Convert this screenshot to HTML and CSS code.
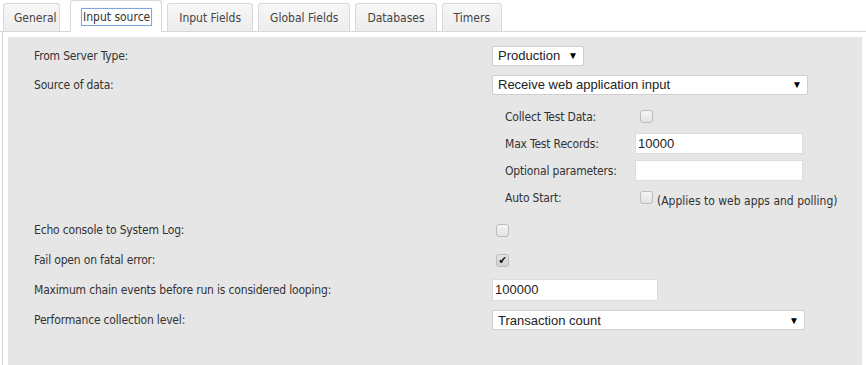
FILE: index.html
```html
<!DOCTYPE html>
<html>
    <head>
        <meta charset="utf-8" />
        <title>Input source</title>
        <link rel="stylesheet" href="styles.css">
    </head>
    <body>
        <div class="tabs">
            <div class="tab first">General</div>
            <div class="tab active"><span class="focus">Input source</span></div>
            <div class="tab">Input Fields</div>
            <div class="tab">Global Fields</div>
            <div class="tab">Databases</div>
            <div class="tab">Timers</div>
        </div>

        <div class="tab-body">
            <div class="panel">
                <div class="row">
                    <div class="label">From Server Type:</div>
                    <div class="value">
                        <div class="select select-short"><span>Production</span><span class="arrow">&#9660;</span></div>
                    </div>
                </div>

                <div class="row">
                    <div class="label">Source of data:</div>
                    <div class="value">
                        <div class="select select-long"><span>Receive web application input</span><span class="arrow">&#9660;</span></div>
                    </div>
                </div>

                <div class="sub">
                    <div class="sub-row">
                        <div class="sub-label">Collect Test Data:</div>
                        <div class="sub-value"><span class="check"></span></div>
                    </div>
                    <div class="sub-row">
                        <div class="sub-label">Max Test Records:</div>
                        <div class="sub-value"><div class="text-input sub-input">10000</div></div>
                    </div>
                    <div class="sub-row">
                        <div class="sub-label">Optional parameters:</div>
                        <div class="sub-value"><div class="text-input sub-input"></div></div>
                    </div>
                    <div class="sub-row">
                        <div class="sub-label">Auto Start:</div>
                        <div class="sub-value">
                            <span class="check"></span>
                            <span class="note">(Applies to web apps and polling)</span>
                        </div>
                    </div>
                </div>

                <div class="row wide">
                    <div class="label">Echo console to System Log:</div>
                    <div class="value"><span class="check top-check"></span></div>
                </div>

                <div class="row wide">
                    <div class="label">Fail open on fatal error:</div>
                    <div class="value"><span class="check top-check checked">&#10004;</span></div>
                </div>

                <div class="row wide">
                    <div class="label">Maximum chain events before run is considered looping:</div>
                    <div class="value"><div class="text-input chain-input">100000</div></div>
                </div>

                <div class="row wide">
                    <div class="label">Performance collection level:</div>
                    <div class="value">
                        <div class="select select-perf"><span>Transaction count</span><span class="arrow">&#9660;</span></div>
                    </div>
                </div>
            </div>
        </div>
    </body>
</html>
```

FILE: styles.css
```css
* {
    box-sizing: border-box;
    margin: 0;
    padding: 0;
}

body {
    font-family: "DejaVu Sans Condensed", "DejaVu Sans", sans-serif;
    font-size: 12px;
    letter-spacing: -0.18px;
    color: #333;
    background-color: #fff;
}

/* tab strip */
.tabs {
    display: flex;
    align-items: flex-end;
    gap: 5px;
    height: 32px;
    padding-left: 3px;
    width: 866px;
    letter-spacing: 0;
    border-bottom: 1px solid #d6d6d6;
}

.tab {
    height: 28px;
    padding: 0 11px;
    display: flex;
    align-items: center;
    color: #444;
    background: linear-gradient(#f7f7f7, #ececec);
    border: 1px solid #d8d8d8;
    border-bottom: none;
    border-radius: 3px 3px 0 0;
}

.tab.first {
    width: 57px;
    padding: 0 0 0 10px;
    margin-right: 5px;
}

.tab.active {
    height: 32px;
    margin-bottom: -1px;
    padding: 0 10px 0 11px;
    background: #fff;
}

.focus {
    padding: 1px 1px;
    outline: 1px solid #7fa6e0;
    box-shadow: 0 0 2px #9dbbee;
    color: #333;
}

/* content */
.tab-body {
    border-left: 1px solid #d6d6d6;
    margin-left: 2px;
    padding: 5px 0 0 5px;
    width: 860px;
}

.panel {
    background-color: #e6e6e6;
    min-height: 340px;
    padding: 4px 0 0 26px;
}

.row {
    display: grid;
    grid-template-columns: 458px 1fr;
    align-items: center;
    height: 29px;
}

.row.wide {
    height: 30px;
}

.sub {
    margin: 4px 0 4px 471px;
}

.sub-row {
    display: grid;
    grid-template-columns: 130px 1fr;
    align-items: center;
    height: 27px;
}

.sub-value {
    display: flex;
    align-items: center;
}

.value {
    display: flex;
    align-items: center;
}

.select {
    display: flex;
    justify-content: space-between;
    align-items: center;
    height: 20px;
    padding: 0 5px;
    font-family: "Liberation Sans", Arial, sans-serif;
    font-size: 13px;
    letter-spacing: 0;
    color: #222;
    background-color: #fff;
    border: 1px solid #cfcfcf;
    border-radius: 2px;
}

.arrow {
    font-size: 10px;
    color: #000;
}

.select-short {
    width: 92px;
}

.select-long {
    width: 316px;
}

.select-perf {
    width: 313px;
}

.text-input {
    height: 22px;
    padding: 0 2px;
    line-height: 20px;
    font-family: "Liberation Sans", Arial, sans-serif;
    font-size: 13px;
    letter-spacing: 0;
    color: #222;
    background-color: #fff;
    border: 1px solid #dcdcdc;
}

.sub-input {
    width: 168px;
    height: 21px;
}

.chain-input {
    width: 166px;
}

.check {
    display: inline-flex;
    align-items: center;
    justify-content: center;
    width: 13px;
    height: 13px;
    margin-left: 5px;
    font-size: 11px;
    color: #111;
    background: linear-gradient(#f6f6f6, #e2e2e2);
    border: 1px solid #bcbcbc;
    border-radius: 3px;
}

.top-check {
    margin-left: 4px;
}

.checked {
    background: linear-gradient(#e4e4e4, #d2d2d2);
}

.note {
    margin-left: 4px;
    margin-top: 6px;
    letter-spacing: 0;
}
```
